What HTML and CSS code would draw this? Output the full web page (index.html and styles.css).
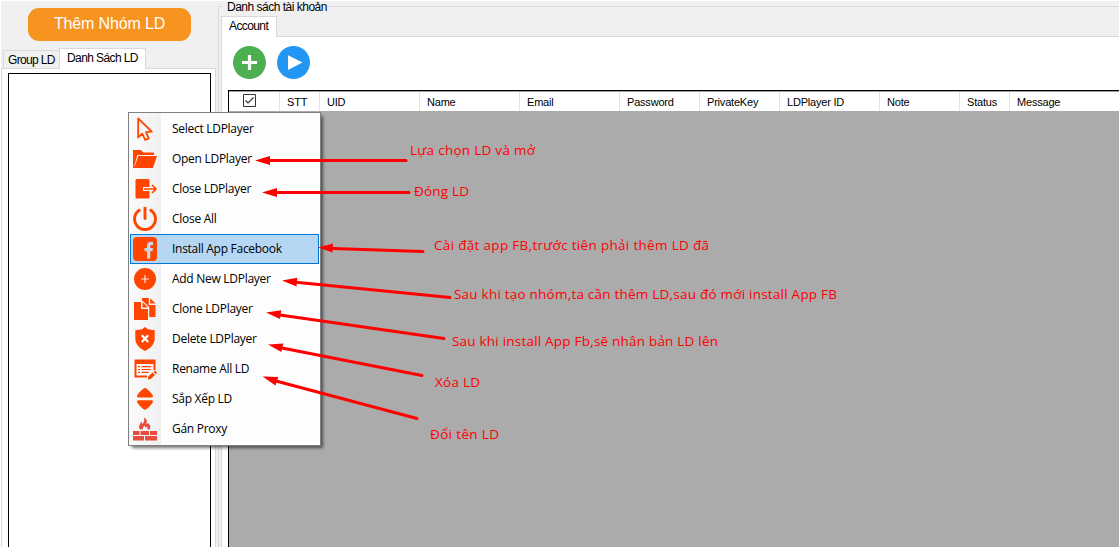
FILE: index.html
```html
<!DOCTYPE html>
<html lang="vi">
<head>
<meta charset="utf-8">
<title>LD</title>
<link rel="stylesheet" href="styles.css">
</head>
<body>
<main class="app">
  <aside class="side">
    <button class="add-group">Thêm Nhóm LD</button>
    <div class="tabs side-tabs"><span class="tab tab-group">Group LD</span><span class="tab tab-list active">Danh Sách LD</span></div>
    <div class="side-page"><div class="listbox"></div></div>
  </aside>
  <section class="accounts">
    <div class="legend"><span>Danh sách tài khoản</span></div>
    <div class="group">
      <div class="tabs"><span class="tab tab-account active">Account</span></div>
      <div class="page">
        <div class="tools">
          <svg width="33" height="33" viewBox="0 0 33 33"><circle cx="16.5" cy="16.5" r="16.5" fill="#4caf50"/><path d="M9 16.5H24M16.5 9V24" stroke="#fff" stroke-width="3.2"/></svg>
          <svg width="33" height="33" viewBox="0 0 33 33"><circle cx="16.5" cy="16.5" r="16.5" fill="#2196f3"/><path d="M11 9.3 25.5 16.5 11 24Z" fill="#fff"/></svg>
        </div>
        <div class="grid">
          <div class="head">
            <span class="c check"><svg width="13" height="13" viewBox="0 0 13 13"><path d="M.5.5h12v12H.5z" fill="#fff" stroke="#333"/><path d="M2.5 6.5 5 9 10.5 3.5" fill="none" stroke="#333" stroke-width="1.2"/></svg></span>
            <span class="c w40">STT</span><span class="c w100">UID</span><span class="c w100">Name</span><span class="c w100">Email</span><span class="c w80">Password</span><span class="c w80">PrivateKey</span><span class="c w100">LDPlayer ID</span><span class="c w80">Note</span><span class="c w50">Status</span><span class="c last">Message</span>
          </div>
        </div>
      </div>
    </div>
  </section>
</main>

<ul class="menu">
  <li><svg class="ico" viewBox="0 0 24 24"><path d="M5.2 1.5V20.5L9.3 16.6 12.2 23 15.7 21.4 13 15.2 18.8 14.7Z" fill="none" stroke="#ff4500" stroke-width="1.8" stroke-linejoin="round"/></svg><span>Select LDPlayer</span></li>
  <li><svg class="ico" viewBox="0 0 24 24"><path d="M0 3H8L10.5 5.5H21V8H4.3L1.5 18.5V21H0ZM5.3 9H24L20 21H1.2Z"/></svg><span>Open LDPlayer</span></li>
  <li><svg class="ico" viewBox="0 0 24 24"><path d="M4 2H15Q16.5 2 16.5 3.5V10H10V14H16.5V20Q16.5 21.5 15 21.5H4Q2.5 21.5 2.5 20V3.5Q2.5 2 4 2Z"/><path d="M11 12H22.8M19 8 23 12 19 16" fill="none" stroke="#ff4500" stroke-width="1.7"/></svg><span>Close LDPlayer</span></li>
  <li><svg class="ico" viewBox="0 0 24 24"><path d="M6.2 3.3A10.5 10.5 0 1 0 17.8 3.3M12 .5V11.5" fill="none" stroke="#ff4500" stroke-width="2.9" stroke-linecap="round"/></svg><span>Close All</span></li>
  <li class="selected"><svg class="ico" viewBox="0 0 24 24"><rect width="24" height="24" rx="4"/><path d="M14 21.5V14.3H11.5V11H14V9Q14 4.8 18 4.8H20V8H18.5Q17.3 8 17.3 9.3V11H20L19.5 14.3H17.3V21.5Z" fill="#c3d8e8"/></svg><span>Install App Facebook</span></li>
  <li><svg class="ico" viewBox="0 0 24 24"><circle cx="12" cy="12" r="11"/><path d="M8 12H16M12 8V16" stroke="#ffe2d8" stroke-width="1.2"/></svg><span>Add New LDPlayer</span></li>
  <li><svg class="ico" viewBox="0 0 24 24"><path d="M1 5H8V12H15V23H1ZM9.5 5.2 15 10.5H9.5ZM9 1H15.8V8H22.5V20H16.2V10L9 3.5ZM17.2 1.2 22.6 6.5H17.2Z"/></svg><span>Clone LDPlayer</span></li>
  <li><svg class="ico" viewBox="0 0 24 24"><path d="M12 0 15 2.2 21.7 3.3V11C21.7 17 18 21 12 24 6 21 2.3 17 2.3 11V3.3L9 2.2Z"/><path d="M8.8 8.3 15.2 15M15.2 8.3 8.8 15" stroke="#fff" stroke-width="2.2"/></svg><span>Delete LDPlayer</span></li>
  <li><svg class="ico" viewBox="0 0 24 24"><path d="M1.5 2.5H22.5V13H20.5V7H3.5V18.5H14V20.5H1.5Z"/><path d="M5 9.7H7M8.5 9.7H18M5 12.5H7M8.5 12.5H18M5 15.3H7M8.5 15.3H15.5" stroke="#ff4500" stroke-width="1.2"/><path d="M14.8 22.5 15.5 19.3 19.7 15.6 22 18 17.8 22ZM20.5 14.8 22 13.5 24 15.8 22.7 17.2Z"/></svg><span>Rename All LD</span></li>
  <li><svg class="ico" viewBox="0 0 24 24"><path d="M12 1C14 1 20 7.5 20 9.2Q20 10.5 18.5 10.5H5.5Q4 10.5 4 9.2C4 7.5 10 1 12 1ZM5.5 13.2H18.5Q20 13.2 20 14.5C20 16.2 14 22.7 12 22.7S4 16.2 4 14.5Q4 13.2 5.5 13.2Z"/></svg><span>Sắp Xếp LD</span></li>
  <li><svg class="ico brick" viewBox="0 0 24 24"><path d="M0 14H6.5V18H0ZM7.5 14H16V18H7.5ZM17 14H24V18H17ZM0 19H11V23.5H0ZM12 19H24V23.5H12ZM7.2 12.5C4.5 9 7.5 7.5 8 4.7 9 5.3 9.4 6.2 9.3 7.2 11.2 5.3 11.8 3 10.8.5 14.5 2 14 5 13.4 7.3 14.2 6.9 14.6 6.4 14.9 5.7 16 7.3 18.8 9 16.5 12.5H14.3C15 11 14.4 10.3 13.7 9.5L12.8 11 11.5 8.5C11 10 9 10.4 9.8 12.5Z"/></svg><span>Gán Proxy</span></li>
</ul>

<svg class="notes" width="1120" height="549" viewBox="0 0 1120 549">
  <g class="arrows">
    <path d="M406 160.5 270 160.5"/><path d="M409 192.5 276 192.5"/><path d="M423 251.5 333 248.5"/><path d="M450 297.5 296 282.3"/><path d="M444 338.5 280 315"/><path d="M422 375.5 282 348"/><path d="M417 418.5 276 381"/>
  </g>
  <g class="tips">
    <path d="M255 160.5 270 156V165Z"/><path d="M262 192.5 277 188V197Z"/><path d="M318 247.5 333 243.5 332.5 252.5Z"/><path d="M282 280.5 297.3 277.7 296.5 286.5Z"/><path d="M266 312.5 281.2 310.3 280 319Z"/><path d="M268 344.5 283.3 343.5 281.3 352Z"/><path d="M262.5 376.5 278.3 377 275.5 385.5Z"/>
  </g>
  <g class="captions">
    <text x="410" y="155" textLength="125">Lựa chọn LD và mở</text>
    <text x="414" y="196" textLength="55">Đóng LD</text>
    <text x="434" y="250" textLength="275">Cài đặt app FB,trước tiên phải thêm LD đã</text>
    <text x="454" y="299" textLength="383">Sau khi tạo nhóm,ta cần thêm LD,sau đó mới install App FB</text>
    <text x="452" y="346" textLength="266">Sau khi install App Fb,sẽ nhân bản LD lên</text>
    <text x="435" y="387" textLength="45">Xóa LD</text>
    <text x="430" y="439" textLength="69">Đổi tên LD</text>
  </g>
</svg>
</body>
</html>
```
FILE: styles.css
```css
* { box-sizing: border-box; }
body { margin: 0; width: 1120px; height: 549px; overflow: hidden; background: #fff; color: #000; font: 11px/14px "Liberation Sans", Arial, sans-serif; white-space: nowrap; }
.app { display: flex; width: 1118px; height: 546px; margin: 1px; background: #f0f0f0; overflow: hidden; }
.side { display: flex; flex-direction: column; width: 215px; flex: none; }
.add-group { width: 163px; height: 33px; margin: 7px 0 0 27px; padding: 0 0 1px; border: 0; border-radius: 11px; background: #f7941f; color: #fff; font: 16px "Liberation Sans", Arial, sans-serif; letter-spacing: -.15px; }
.tabs { display: flex; align-items: flex-end; height: 20px; }
.side-tabs { margin: 7px 0 -1px 2px; height: 21px; }
.tab { height: 19px; padding: 3px 0 0 5px; border: 1px solid #d9d9d9; background: #f0f0f0; }
.tab.active { height: 21px; background: #fff; border-bottom: 0; position: relative; }
.tab-group { width: 57px; padding: 2px 0 0 4px; border-right: 0; font-size: 12px; letter-spacing: -.65px; }
.tab-list { width: 87px; margin-left: -1px; padding-left: 7px; padding-top: 2px; font-size: 12px; letter-spacing: -.6px; }
.side-page { display: flex; flex: 1; padding: 4px 4px 0 6px; border: 1px solid #d9d9d9; border-bottom: 0; background: #fff; }
.listbox { flex: 1; border: 1px solid #000; border-bottom: 0; }
.accounts { flex: 1; padding-left: 2px; min-width: 0; display: flex; flex-direction: column; }
.legend { height: 5px; position: relative; z-index: 2; }
.legend span { display: block; width: 106px; margin-left: 5px; padding: 0 4px; background: #f0f0f0; height: 12px; line-height: 12px; font-size: 12px; letter-spacing: -.5px; }
.group { flex: 1; display: flex; flex-direction: column; padding: 9px 0 0 2px; border: solid #d9d9d9; border-width: 1px 0 0 1px; }
.tab-account { width: 56px; padding: 2px 0 0 7px; font-size: 12px; letter-spacing: -.6px; }
.page { flex: 1; padding: 9px 0 0 6px; border: solid #d9d9d9; border-width: 1px 0 0 1px; background: #fff; display: flex; flex-direction: column; }
.group .tab.active { margin-bottom: -1px; }
.tools { display: flex; gap: 11px; padding-left: 5px; height: 44px; }
.grid { flex: 1; border: solid #000; border-width: 1px 0 0 1px; background: #ababab; }
.head { display: flex; height: 20px; border-top: 1px solid #a0a0a0; background: #fff; }
.c { flex: none; height: 19px; padding: 3px 0 0 7px; border-right: 1px solid #e2e2e2; font-size: 11px; letter-spacing: -.2px; }
.check { width: 51px; padding: 2px 0 0 14px; }
.w40 { width: 40px; } .w50 { width: 50px; } .w80 { width: 80px; } .w100 { width: 100px; }
.last { flex: 1; border: 0; }
.menu { position: absolute; left: 128px; top: 112px; width: 193px; height: 334px; margin: 0; padding: 1px; list-style: none; border: 1px solid #808080; background: linear-gradient(90deg, #fbfbfb 1px, #f0f0f0 32px, #fdfdfd 32px); box-shadow: 3px 3px 3px -1px rgba(0,0,0,.55); font: 12px/30px "Open Sans", "Noto Sans", sans-serif; letter-spacing: -.28px; }
.menu li { display: flex; align-items: center; height: 30px; padding-left: 3px; gap: 15px; }
.menu .selected { background: #b5d7f3; box-shadow: inset 0 0 0 1px #0078d7; }
.ico { width: 24px; height: 24px; flex: none; fill: #ff4500; }
.brick { fill: #e74c3c; }
.notes { position: absolute; left: 0; top: 0; }
.arrows { stroke: #f00; stroke-width: 3; stroke-linecap: round; }
.tips { fill: #f00; }
.captions { fill: #f00; font: 13.5px "Open Sans", "Noto Sans", sans-serif; }
```
